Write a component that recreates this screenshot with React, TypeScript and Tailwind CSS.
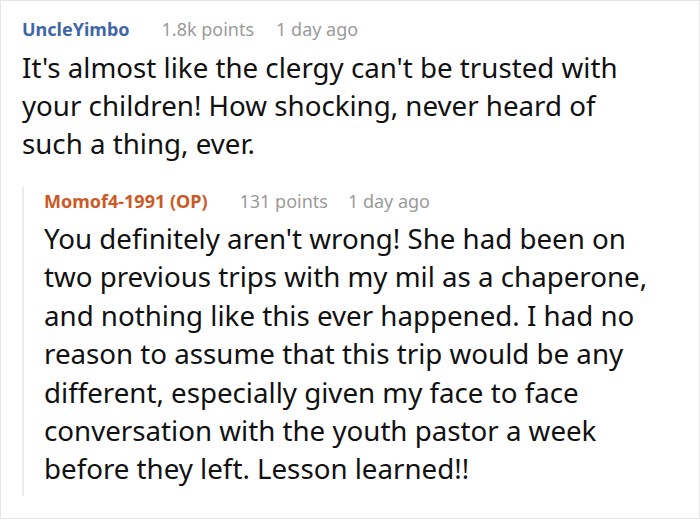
export default function App() {
  return (
    <div className="w-[700px] h-[520px] bg-white">
      <div
        className="h-[519px] border border-[#e6e6e6] pl-[21px] pr-[40px] pt-[14px]"
        style={{ fontFamily: '"Noto Sans", sans-serif' }}
      >
        {/* Top comment */}
        <div className="flex items-baseline text-[18px] leading-[28px]">
          <span className="font-bold text-[#3f67a6]">UncleYimbo</span>
          <span className="ml-[32px] text-[#9a9a9a]">1.8k points</span>
          <span className="ml-[22px] text-[#9a9a9a]">1 day ago</span>
        </div>
        <p className="text-[27.7px] leading-[38px] text-[#111] mt-[5px]">
          It's almost like the clergy can't be trusted with your children! How shocking, never heard of such a
          thing, ever.
        </p>

        {/* Reply */}
        <div className="mt-[37px] border-l-2 border-[#ececec] pl-[20px] pb-[8px]">
          <div className="-mt-[12px] flex items-baseline text-[18px] leading-[28px]">
            <span className="font-bold text-[#cc5a26]">Momof4-1991 (OP)</span>
            <span className="ml-[32px] text-[#9a9a9a]">131 points</span>
            <span className="ml-[20px] text-[#9a9a9a]">1 day ago</span>
          </div>
          <p className="text-[27.7px] leading-[38.4px] text-[#111] mt-[4px]">
            You definitely aren't wrong! She had been on two previous trips with my mil as a chaperone, and nothing
            like this ever happened. I had no reason to assume that this trip would be any different, especially
            given my face to face conversation with the youth pastor a week before they left. Lesson learned!!
          </p>
        </div>
      </div>
    </div>
  );
}
